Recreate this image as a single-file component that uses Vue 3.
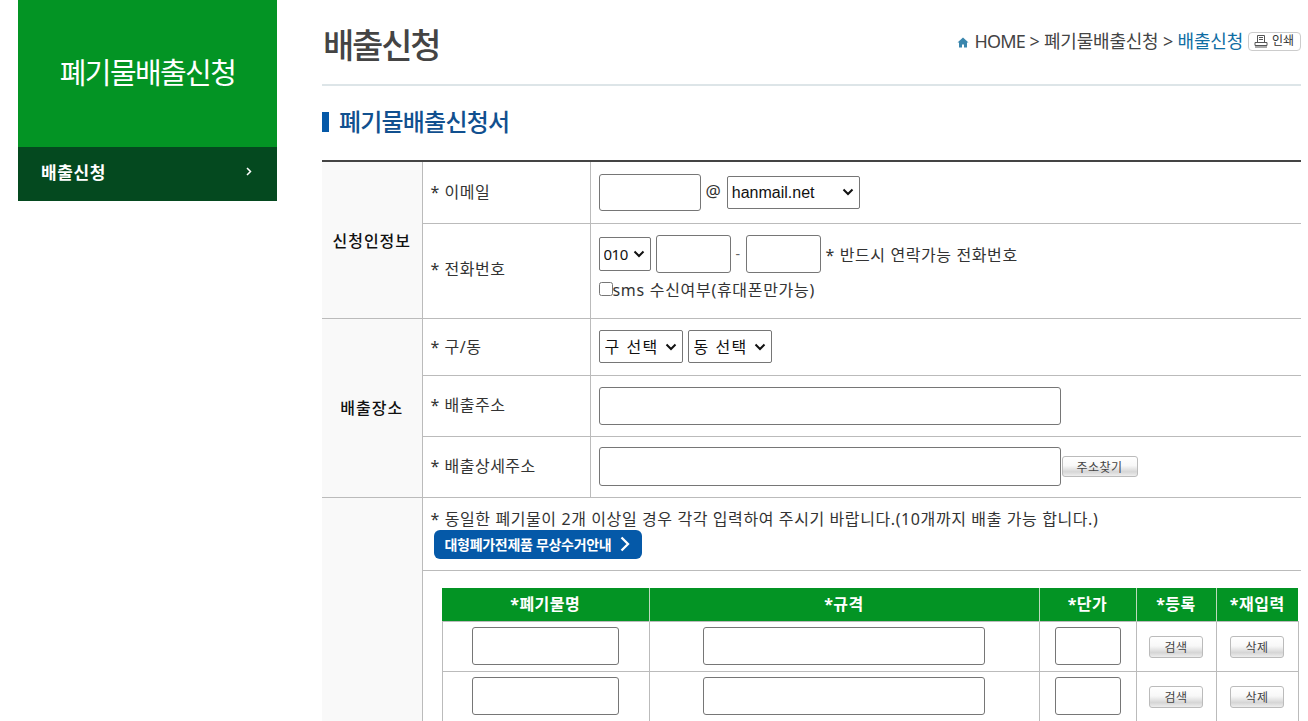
<script setup>
const wasteRows = [1, 2]
const headers = ['*폐기물명', '*규격', '*단가', '*등록', '*재입력']
</script>

<template>
  <div class="page">
    <aside class="side">
      <h2 class="side-title">폐기물배출신청</h2>
      <div class="side-item">
        <span>배출신청</span>
        <svg width="6" height="9" viewBox="0 0 6 9"><path d="M1 1l3.500 3.500L1 8" fill="none" stroke="#fff" stroke-width="1.500" /></svg>
      </div>
    </aside>

    <main class="main">
      <header class="top">
        <h1>배출신청</h1>
        <div class="crumb">
          <svg class="home" width="12" height="11" viewBox="0 0 12 11"><path d="M6 0.500L0.500 5.500H2V10.500H5V7.500H7V10.500H10V5.500H11.500Z" fill="#3a86ad" /></svg>
          <span class="home-word">HOME</span><span> &gt; 폐기물배출신청 &gt; </span><b>배출신청</b>
          <span class="print">
            <svg width="14" height="14" viewBox="0 0 14 14"><path d="M3.500 8V1.500h7V8M5 3.500h4M5 5.500h4M1 8.500h12v3H1zM1 13h12" fill="none" stroke="#555" /></svg>
            <i>인쇄</i>
          </span>
        </div>
      </header>

      <h3 class="section"><span class="mark"></span>폐기물배출신청서</h3>

      <table class="form">
        <colgroup><col class="c1" /><col class="c2" /><col /></colgroup>
        <tbody>
          <tr class="r-email">
            <th rowspan="2">신청인정보</th>
            <td class="label">* 이메일</td>
            <td class="field">
              <input class="in-mail" type="text" />
              <span class="at">@</span>
              <select class="sel-mail"><option>hanmail.net</option></select>
            </td>
          </tr>
          <tr class="r-tel">
            <td class="label">* 전화번호</td>
            <td class="field tel-cell">
              <div class="tel-line">
                <select class="sel-tel"><option>010</option></select>
                <input class="in-tel" type="text" />
                <span class="dash">-</span>
                <input class="in-tel" type="text" />
                <span class="note">* 반드시 연락가능 전화번호</span>
              </div>
              <label class="sms"><input type="checkbox" />sms 수신여부(휴대폰만가능)</label>
            </td>
          </tr>
          <tr class="r-gu">
            <th rowspan="3" class="place">배출장소</th>
            <td class="label">* 구/동</td>
            <td class="field">
              <select class="sel-gu"><option>구 선택</option></select>
              <select class="sel-gu second"><option>동 선택</option></select>
            </td>
          </tr>
          <tr class="r-addr">
            <td class="label">* 배출주소</td>
            <td class="field"><input class="in-addr" type="text" /></td>
          </tr>
          <tr class="r-addr2">
            <td class="label">* 배출상세주소</td>
            <td class="field addr-line">
              <input class="in-addr" type="text" /><button class="grey find" type="button">주소찾기</button>
            </td>
          </tr>
          <tr class="r-info">
            <th rowspan="2"></th>
            <td colspan="2" class="info">
              <p>* 동일한 폐기물이 2개 이상일 경우 각각 입력하여 주시기 바랍니다.(10개까지 배출 가능 합니다.)</p>
              <a class="guide">
                대형폐가전제품 무상수거안내
                <svg width="10" height="16" viewBox="0 0 10 16"><path d="M1.500 1.500L8 8l-6.500 6.500" fill="none" stroke="#fff" stroke-width="2.300" /></svg>
              </a>
            </td>
          </tr>
          <tr>
            <td colspan="2" class="inner-cell">
              <table class="waste">
                <colgroup><col class="w1" /><col class="w2" /><col class="w3" /><col class="w4" /><col class="w5" /></colgroup>
                <thead>
                  <tr><th v-for="h in headers" :key="h">{{ h }}</th></tr>
                </thead>
                <tbody>
                  <tr v-for="r in wasteRows" :key="r">
                    <td><input class="in-name" type="text" /></td>
                    <td><input class="in-spec" type="text" /></td>
                    <td><input class="in-price" type="text" /></td>
                    <td><button class="grey small" type="button">검색</button></td>
                    <td><button class="grey small" type="button">삭제</button></td>
                  </tr>
                </tbody>
              </table>
            </td>
          </tr>
        </tbody>
      </table>
    </main>
  </div>
</template>

<style>
html, body { margin: 0; height: 721px; overflow: hidden; background: #fff; }
</style>

<style scoped>
.page {
  display: flex;
  align-items: flex-start;
  width: 1308px;
  height: 721px;
  overflow: hidden;
  font-family: "Noto Sans", "Noto Sans CJK KR", sans-serif;
  color: #333;
}
.side { width: 259px; margin-left: 18px; flex: none; }
.side-title {
  margin: 0;
  height: 147px;
  box-sizing: border-box;
  padding-top: 52px;
  background: #039424;
  color: #fff;
  font-size: 29px;
  line-height: 42px;
  font-weight: 400;
  letter-spacing: -1.600px;
  text-align: center;
}
.side-item {
  height: 54px;
  box-sizing: border-box;
  padding: 0 25px 6px 23px;
  background: #04491f;
  color: #fff;
  font-size: 17px;
  font-weight: 700;
  letter-spacing: 0.600px;
  display: flex;
  align-items: center;
  justify-content: space-between;
}
.main { width: 979px; margin-left: 45px; flex: none; }
.top {
  height: 86px;
  box-sizing: border-box;
  border-bottom: 2px solid #dde5e8;
  display: flex;
  justify-content: space-between;
  align-items: flex-start;
}
.top h1 {
  margin: 20px 0 0 1px;
  font-size: 34px;
  line-height: 50px;
  font-weight: 500;
  letter-spacing: -2.200px;
  color: #444;
}
.crumb {
  margin-top: 28px;
  display: flex;
  align-items: center;
  font-size: 18px;
  line-height: 26px;
  letter-spacing: -0.200px;
  white-space: pre;
  color: #444;
}
.home-word { letter-spacing: -0.800px; }
.crumb .home { margin-right: 5px; margin-top: 2px; }
.crumb b { font-weight: 400; color: #0f6da3; }
.print {
  display: flex;
  align-items: center;
  gap: 4px;
  margin-left: 5px;
  width: 53px;
  height: 19px;
  box-sizing: border-box;
  padding-left: 5px;
  border: 1px solid #ccc;
  border-radius: 4px;
}
.print i { font-style: normal; font-size: 12px; letter-spacing: 0; color: #333; }
.section {
  margin: 20px 0 0;
  height: 32px;
  display: flex;
  align-items: center;
  font-size: 24px;
  line-height: 32px;
  font-weight: 500;
  letter-spacing: -0.800px;
  color: #11508f;
}
.mark { width: 7px; height: 20px; background: #0559a8; margin-right: 10px; }
.form {
  width: 979px;
  margin-top: 22px;
  table-layout: fixed;
  border-collapse: collapse;
  border-top: 2px solid #444;
  font-size: 16px;
  letter-spacing: 0.500px;
  color: #333;
}
.c1 { width: 100px; }
.c2 { width: 168px; }
.form > tbody > tr > th {
  background: #f9f9f9;
  border-right: 1px solid #bbb;
  border-bottom: 1px solid #bbb;
  padding: 0;
  font-size: 16px;
  font-weight: 500;
  letter-spacing: 1px;
  color: #111;
  text-align: center;
}
.form > tbody > tr > th.place { padding-bottom: 2px; }
.form > tbody > tr > td {
  padding: 0 0 0 8px;
  border-bottom: 1px solid #bbb;
  vertical-align: middle;
}
.form > tbody > tr > td.label { border-right: 1px solid #bbb; padding-bottom: 2px; }
.form > tbody > tr.r-tel > td.label { padding-bottom: 6px; }
.form > tbody > tr.r-addr > td.label,
.form > tbody > tr.r-addr2 > td.label { padding-bottom: 4px; }
.form > tbody > tr > td.tel-cell { vertical-align: top; padding-top: 11px; }
.r-email { height: 62px; }
.r-tel { height: 95px; }
.r-gu { height: 57px; }
.r-addr { height: 61px; }
.r-addr2 { height: 61px; }
.r-info { height: 73px; }
input, select, button {
  box-sizing: border-box;
  margin: 0;
  font-family: inherit;
  vertical-align: middle;
}
.in-mail, .in-tel, .in-addr, .in-name, .in-spec, .in-price {
  border: 1px solid #767676;
  border-radius: 3px;
  background: #fff;
  padding: 0;
}
select {
  appearance: none;
  border: 1px solid #767676;
  border-radius: 2px;
  background: #fff url("data:image/svg+xml,%3Csvg xmlns='http://www.w3.org/2000/svg' width='12' height='8' viewBox='0 0 12 8'%3E%3Cpath d='M1.500 1.500L6 6l4.500-4.500' fill='none' stroke='%23111' stroke-width='2'/%3E%3C/svg%3E") no-repeat right 5px center;
  color: #111;
  font-size: 16px;
  padding: 0 0 0 4px;
}
.in-mail { width: 102px; height: 37px; }
.at { margin: 0 6px 0 5px; font-size: 17px; letter-spacing: 0; }
.sel-mail { width: 133px; height: 33px; font-family: "Liberation Sans", sans-serif; }
.tel-line { display: flex; align-items: center; }
.sel-tel { width: 52px; height: 34px; font-size: 15px; letter-spacing: -0.500px; }
.in-tel { width: 75px; height: 38px; margin-left: 5px; }
.dash { width: 15px; text-align: center; font-size: 14px; margin-right: -5px; color: #666; }
.note { margin-left: 5px; letter-spacing: 0.600px; }
.sms { display: flex; align-items: center; margin-top: 3px; height: 26px; letter-spacing: 0.700px; }
.sms input { margin: 1px 0 0 0; width: 14px; height: 14px; }
.sel-gu { width: 84px; height: 33px; padding-left: 5px; letter-spacing: 1.500px; }
.second { margin-left: 5px; }
.in-addr { width: 462px; height: 38px; }
.addr-line .in-addr { height: 39px; }
.grey {
  border: 1px solid #bbb;
  border-radius: 3px;
  background: linear-gradient(#fff 0%, #f8f8f8 45%, #d6d6d6 78%, #eee 100%);
  color: #444;
  padding: 0;
  font-size: 12px;
  letter-spacing: 0.500px;
}
.find { width: 76px; height: 21px; margin-left: 1px; }
.small { width: 54px; height: 22px; }
.form > tbody > tr > td.info { vertical-align: top; padding-top: 10px; }
.info p { margin: 0; line-height: 22px; letter-spacing: 0.600px; }
.guide {
  display: inline-flex;
  align-items: center;
  gap: 9px;
  margin: 0 0 0 3px;
  width: 208px;
  height: 29px;
  box-sizing: border-box;
  padding-left: 11px;
  background: #0559a8;
  border-radius: 6px;
  color: #fff;
  font-size: 14px;
  font-weight: 700;
  letter-spacing: -0.300px;
}
.form > tbody > tr > td.inner-cell { padding: 17px 0 0 19px; vertical-align: top; }
.waste { width: 857px; table-layout: fixed; border-collapse: collapse; }
.w1 { width: 207px; }
.w2 { width: 390px; }
.w3 { width: 97px; }
.w4 { width: 80px; }
.waste th {
  height: 31px;
  padding: 0 0 2px;
  background: #039424;
  border-right: 1px solid #bcd9bc;
  color: #fff;
  font-size: 16px;
  font-weight: 700;
  letter-spacing: 0.500px;
  text-align: center;
}
.waste th:last-child { border-right: 0; }
.waste td {
  height: 49px;
  padding: 0;
  border: 1px solid #bbb;
  text-align: center;
}
.in-name { width: 147px; height: 38px; }
.in-spec { width: 282px; height: 38px; }
.in-price { width: 66px; height: 38px; }
</style>
